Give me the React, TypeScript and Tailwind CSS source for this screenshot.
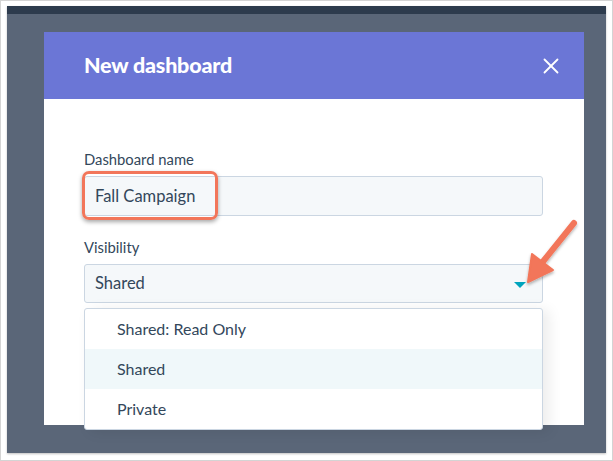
import { X } from 'lucide-react';

const FONT = { fontFamily: 'Lato, "Noto Sans", sans-serif' };

const OPTIONS = ['Shared: Read Only', 'Shared', 'Private'];

function Field({ label, children }: { label: string; children: React.ReactNode }) {
    return (
        <div className="flex flex-col">
            <label className="text-[14.8px] leading-5 text-[#33475b] mb-[7px]">{label}</label>
            {children}
        </div>
    );
}

export default function App() {
    return (
        <div className="relative w-[613px] h-[461px] bg-white border border-[#d4d4d4]" style={FONT}>
            {/* screenshot area */}
            <div className="mt-[5px] ml-[6px] w-[599px] h-[447px] flex flex-col shadow-[0_1px_2px_rgba(0,0,0,0.25)]">
                <div className="h-[8px] bg-[#2d3b4d]" />
                <div className="flex-1 bg-[#5a6678] pl-[37px] pt-[18px]">
                    {/* modal */}
                    <div className="w-[540px] h-[393px] bg-white flex flex-col">
                        <div className="h-[67px] bg-[#6b76d6] flex items-center justify-between pl-[40px] pr-[20px]">
                            <h1 className="text-white text-[21.5px] font-black tracking-[-0.2px]">New dashboard</h1>
                            <X className="w-[26px] h-[26px] text-white" strokeWidth={1.7} />
                        </div>

                        <div className="flex flex-col px-[40px] pt-[50px] pr-[41px]">
                            <Field label="Dashboard name">
                                <div className="relative h-[40px] bg-[#f5f8fa] border border-[#cbd6e2] rounded-[3px] flex items-center pl-[10px] text-[16.5px] text-[#33475b]">
                                    Fall Campaign
                                    {/* highlight */}
                                    <div className="absolute left-[-3px] top-[-6px] w-[136px] h-[49px] rounded-[7px] border-[3px] border-[#f2765a] shadow-[0_2px_4px_rgba(0,0,0,0.35)]" />
                                </div>
                            </Field>

                            <div className="h-[21px]" />

                            <Field label="Visibility">
                                <div className="relative">
                                    <div className="h-[39px] bg-[#f5f8fa] border border-[#cbd6e2] rounded-[3px] flex items-center justify-between pl-[10px] pr-[16px] text-[16.5px] text-[#33475b]">
                                        Shared
                                        <span className="w-0 h-0 mt-[2px] border-l-[6px] border-r-[6px] border-t-[6px] border-l-transparent border-r-transparent border-t-[#00a4bd]" />
                                    </div>

                                    {/* dropdown menu */}
                                    <div className="absolute left-0 right-0 top-[44px] bg-white border border-[#cbd6e2] rounded-[3px] shadow-[6px_2px_14px_rgba(0,0,0,0.08)] text-[16px] text-[#33475b] z-10">
                                        {OPTIONS.map((opt) => (
                                            <div
                                                key={opt}
                                                className={`h-[40px] flex items-center pl-[32px] ${opt === 'Shared' ? 'bg-[#f0f8fa]' : ''}`}
                                            >
                                                {opt}
                                            </div>
                                        ))}
                                    </div>
                                </div>
                            </Field>
                        </div>
                    </div>
                </div>
            </div>

            {/* annotation arrow */}
            <svg className="absolute left-0 top-0 pointer-events-none" width="613" height="461">
                <defs>
                    <filter id="sh" x="-50%" y="-50%" width="200%" height="200%">
                        <feDropShadow dx="0" dy="2" stdDeviation="1.5" floodColor="#000" floodOpacity="0.3" />
                    </filter>
                </defs>
                <g filter="url(#sh)" fill="#f2765a" stroke="#f2765a">
                    <line x1="573" y1="222" x2="540" y2="263" strokeWidth="6" strokeLinecap="round" />
                    <polygon points="527,281 531,253 552,269" strokeWidth="2" strokeLinejoin="round" />
                </g>
            </svg>
        </div>
    );
}
